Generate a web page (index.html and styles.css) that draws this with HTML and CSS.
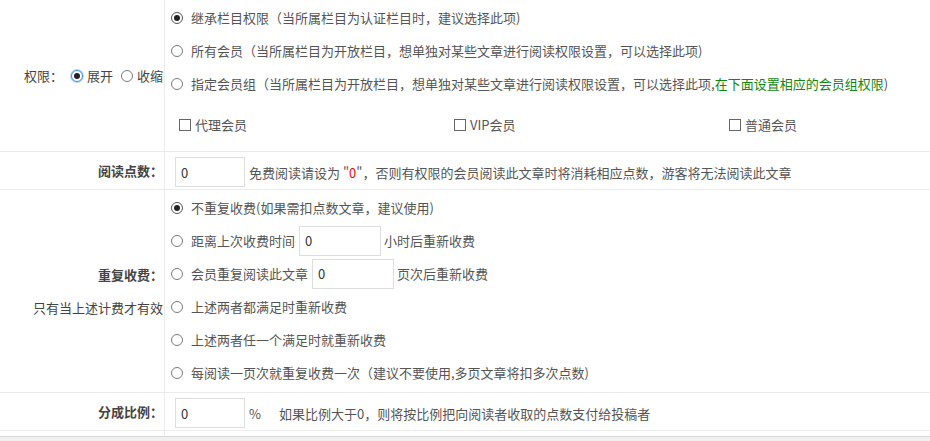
FILE: index.html
```html
<!DOCTYPE html>
<html lang="zh-CN">
<head>
<meta charset="utf-8">
<title>权限设置</title>
<link rel="stylesheet" href="styles.css">
</head>
<body>
<div class="form">
  <div class="row">
    <div class="label label-plain">
      <span class="label-text">权限：</span>
      <span class="opt"><span class="radio checked focus"></span>展开</span>
      <span class="opt"><span class="radio"></span>收缩</span>
    </div>
    <div class="field field-perm">
      <div class="item"><span class="radio checked"></span>继承栏目权限（当所属栏目为认证栏目时，建议选择此项)</div>
      <div class="item"><span class="radio"></span>所有会员（当所属栏目为开放栏目，想单独对某些文章进行阅读权限设置，可以选择此项)</div>
      <div class="item"><span class="radio"></span>指定会员组（当所属栏目为开放栏目，想单独对某些文章进行阅读权限设置，可以选择此项,<span class="green">在下面设置相应的会员组权限</span>)</div>
      <div class="groups">
        <span class="check-opt"><span class="checkbox"></span>代理会员</span>
        <span class="check-opt"><span class="checkbox"></span>VIP会员</span>
        <span class="check-opt"><span class="checkbox"></span>普通会员</span>
      </div>
    </div>
  </div>

  <div class="row">
    <div class="label"><b>阅读点数：</b></div>
    <div class="field field-input">
      <span class="input small">0</span>
      <span class="hint">免费阅读请设为 "<span class="red">0</span>"，否则有权限的会员阅读此文章时将消耗相应点数，游客将无法阅读此文章</span>
    </div>
  </div>

  <div class="row">
    <div class="label label-stack">
      <b>重复收费：</b>
      <span>只有当上述计费才有效</span>
    </div>
    <div class="field field-repeat">
      <div class="item"><span class="radio checked"></span>不重复收费(如果需扣点数文章，建议使用)</div>
      <div class="item"><span class="radio"></span>距离上次收费时间<span class="input wide">0</span>小时后重新收费</div>
      <div class="item"><span class="radio"></span>会员重复阅读此文章<span class="input wide">0</span>页次后重新收费</div>
      <div class="item"><span class="radio"></span>上述两者都满足时重新收费</div>
      <div class="item"><span class="radio"></span>上述两者任一个满足时就重新收费</div>
      <div class="item"><span class="radio"></span>每阅读一页次就重复收费一次（建议不要使用,多页文章将扣多次点数)</div>
    </div>
  </div>

  <div class="row">
    <div class="label"><b>分成比例：</b></div>
    <div class="field field-input">
      <span class="input small">0</span>
      <span class="percent">%</span>
      <span class="hint">如果比例大于0，则将按比例把向阅读者收取的点数支付给投稿者</span>
    </div>
  </div>

  <div class="row row-tail">
    <div class="label"></div>
    <div class="field"></div>
  </div>
</div>
<div class="footer"></div>
</body>
</html>
```

FILE: styles.css
```css
html, body {
  margin: 0;
  padding: 0;
  background: #ffffff;
}

body {
  font-family: "Noto Sans CJK SC", "Microsoft YaHei", sans-serif;
  font-size: 13px;
  color: #555555;
  width: 930px;
  height: 441px;
  overflow: hidden;
}

.form {
  display: flex;
  flex-direction: column;
}

.row {
  display: grid;
  grid-template-columns: 165px 1fr;
  border-bottom: 1px solid #ebebeb;
}

.label {
  border-right: 1px solid #ebebeb;
  display: flex;
  align-items: center;
  justify-content: flex-end;
  padding-right: 1px;
  color: #444444;
  white-space: nowrap;
}

.label b {
  font-weight: bold;
  color: #444444;
}

.opt {
  display: inline-flex;
  align-items: center;
  margin-left: 8px;
}

.opt .radio {
  margin-right: 4px;
}

.label-stack {
  flex-direction: column;
  align-items: flex-end;
  justify-content: center;
  line-height: 33px;
}

.field {
  padding-left: 6px;
  white-space: nowrap;
  min-width: 0;
}

.field-perm {
  padding-top: 1px;
  padding-bottom: 10px;
}

.item {
  height: 33px;
  display: flex;
  align-items: center;
}

.item .radio {
  margin-right: 8px;
}

.radio {
  display: inline-block;
  box-sizing: border-box;
  width: 12px;
  height: 12px;
  border: 1px solid #7a7a7a;
  border-radius: 50%;
  background: #ffffff;
  position: relative;
  flex: none;
}

.radio.checked {
  border-color: #555555;
}

.radio.checked::after {
  content: "";
  position: absolute;
  left: 2px;
  top: 2px;
  width: 6px;
  height: 6px;
  border-radius: 50%;
  background: #222222;
}

.radio.focus {
  border-color: #3d8fe0;
  box-shadow: 0 0 0 1px rgba(61, 143, 224, 0.35);
}

.groups {
  margin-top: 8px;
  height: 33px;
  padding-left: 8px;
  display: grid;
  grid-template-columns: 275px 275px auto;
  align-items: center;
}

.check-opt {
  display: inline-flex;
  align-items: center;
}

.checkbox {
  display: inline-block;
  box-sizing: border-box;
  width: 12px;
  height: 12px;
  border: 1px solid #666666;
  margin-right: 4px;
  background: #ffffff;
}

.green {
  color: #118811;
}

.red {
  color: #ff0000;
}

.field-input {
  display: flex;
  align-items: center;
  padding-top: 5px;
  padding-bottom: 2px;
  padding-left: 10px;
}

.input {
  display: inline-flex;
  align-items: center;
  box-sizing: border-box;
  height: 30px;
  border: 1px solid #dddddd;
  padding-left: 5px;
  color: #333333;
  background: #ffffff;
  flex: none;
}

.input.small {
  width: 70px;
  margin-right: 4px;
}

.input.wide {
  width: 82px;
  margin: 0 3px 0 4px;
}

.percent {
  margin-right: 18px;
}

.field-repeat {
  padding-top: 1px;
  padding-bottom: 3px;
}

.row-tail {
  height: 5px;
  border-bottom: none;
}

.footer {
  border-top: 1px solid #d9d9d9;
  background: #efefef;
  height: 10px;
}
```
